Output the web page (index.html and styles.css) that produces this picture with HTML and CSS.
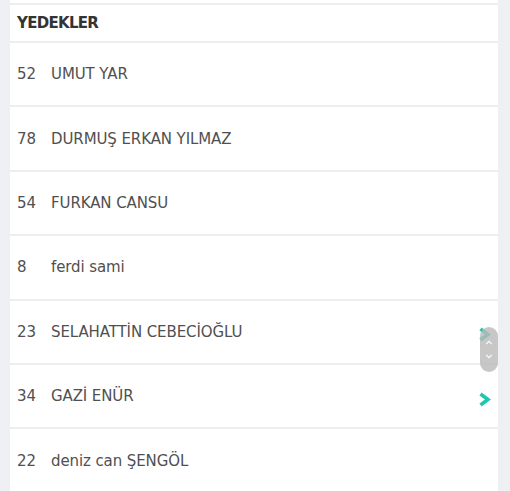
FILE: index.html
```html
<!DOCTYPE html>
<html lang="tr">
<head>
<meta charset="utf-8">
<link rel="stylesheet" href="styles.css">
</head>
<body>
<div class="page">
  <div class="card">
    <div class="head">YEDEKLER</div>
    <div class="row"><span class="num">52</span><span class="name">UMUT YAR</span></div>
    <div class="row"><span class="num">78</span><span class="name">DURMUŞ ERKAN YILMAZ</span></div>
    <div class="row"><span class="num">54</span><span class="name">FURKAN CANSU</span></div>
    <div class="row"><span class="num">8</span><span class="name">ferdi sami</span></div>
    <div class="row"><span class="num">23</span><span class="name">SELAHATTİN CEBECİOĞLU</span>
      <svg class="chev" viewBox="0 0 13 15"><path d="M2.5 2 L10 7.5 L2.5 13" fill="none" stroke="#22c5ad" stroke-width="3.6" stroke-linejoin="miter"/></svg></div>
    <div class="row"><span class="num">34</span><span class="name">GAZİ ENÜR</span>
      <svg class="chev" viewBox="0 0 13 15"><path d="M2.5 2 L10 7.5 L2.5 13" fill="none" stroke="#22c5ad" stroke-width="3.6" stroke-linejoin="miter"/></svg></div>
    <div class="row"><span class="num">22</span><span class="name">deniz can ŞENGÖL</span></div>
  </div>
  <div class="scroller">
    <svg viewBox="0 0 10 6" class="arr"><path d="M1.5 5 L5 1.5 L8.5 5" fill="none" stroke="#fff" stroke-width="1.3"/></svg>
    <svg viewBox="0 0 10 6" class="arr"><path d="M1.5 1 L5 4.5 L8.5 1" fill="none" stroke="#fff" stroke-width="1.3"/></svg>
  </div>
</div>
</body>
</html>
```
FILE: styles.css
```css
html, body {
  margin: 0;
  padding: 0;
  background: #eef0f4;
  height: 100%;
  overflow: hidden;
}
.page {
  position: relative;
  padding: 0 12px 0 10px;
  font-family: "DejaVu Sans", sans-serif;
}
.card {
  background: #fff;
  border-top: 3px solid #fff;
}
.head {
  border-top: 2px solid #eceef1;
  height: 36px;
  border-bottom: 2px solid #eceef1;
  display: flex;
  align-items: center;
  padding-left: 7px;
  font-weight: bold;
  font-size: 15px;
  letter-spacing: -0.7px;
  color: #333;
}
.row {
  height: 62.4px;
  border-bottom: 2px solid #eceef1;
  display: flex;
  align-items: center;
  padding-left: 7px;
  padding-right: 7px;
  font-size: 15px;
  letter-spacing: -0.1px;
  color: #505050;
}
.num {
  width: 34px;
}
.name {
  flex: 1;
}
.chev {
  width: 13px;
  height: 15px;
  margin-top: 6px;
}
.scroller {
  position: absolute;
  left: 480px;
  top: 327px;
  width: 18px;
  height: 45px;
  border-radius: 9px;
  background: rgba(185, 185, 185, 0.8);
  display: flex;
  flex-direction: column;
  align-items: center;
  justify-content: center;
  gap: 9px;
}
.arr {
  width: 8px;
  height: 5px;
}
```
